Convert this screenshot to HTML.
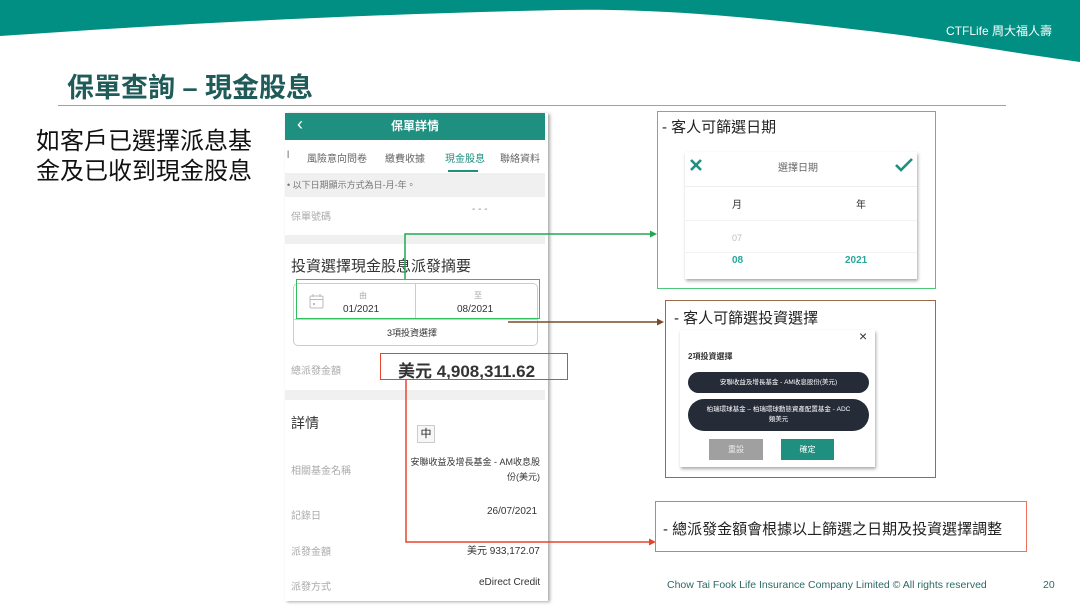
<!DOCTYPE html>
<html><head><meta charset="utf-8"><style>
*{margin:0;padding:0;box-sizing:border-box}
body{width:1080px;height:608px;overflow:hidden;background:#fff;position:relative;font-family:"Liberation Sans","Noto Sans CJK TC",sans-serif;color:#222}
.a{position:absolute;white-space:nowrap}
.g{color:#aaa;font-size:10px}
</style></head><body>
<svg class="a" style="left:0;top:0" width="1080" height="70"><path d="M0 0H1080V62C980 48 930 38 860 30C760 18 660 8 560 10C380 14 200 22 0 36Z" fill="#008f82"/></svg>
<div class="a" style="left:946px;top:22px;color:#fff;font-size:12px">CTF<span style="font-weight:300">Life</span> 周大福人壽</div>
<div class="a" style="left:67px;top:66px;font-size:27px;font-weight:bold;color:#1f5b58">保單查詢 – 現金股息</div>
<div class="a" style="left:58px;top:105px;width:948px;height:1px;background:#8fa9a6"></div>
<div class="a" style="left:36px;top:127px;font-size:24px;line-height:30px;color:#111">如客戶已選擇派息基<br>金及已收到現金股息</div>

<!-- phone -->
<div class="a" style="left:285px;top:113px;width:263px;height:488px;background:#fff;box-shadow:2px 1px 3px #aaa"></div>
<div class="a" style="left:285px;top:113px;width:260px;height:27px;background:#1f8f80;color:#fff;font-size:12px;font-weight:bold;text-align:center;line-height:27px">保單詳情<span style="position:absolute;left:12px;top:-2px;font-weight:normal;font-size:18px">‹</span></div>
<div class="a g" style="left:287px;top:150px;color:#666">Ɩ</div>
<div class="a g" style="left:307px;top:150px;color:#666">風險意向問卷</div>
<div class="a g" style="left:385px;top:150px;color:#666">繳費收據</div>
<div class="a g" style="left:445px;top:150px;color:#1f8f80">現金股息</div>
<div class="a g" style="left:500px;top:150px;color:#666">聯絡資料</div>
<div class="a" style="left:448px;top:170px;width:30px;height:2px;background:#1f8f80"></div>
<div class="a" style="left:285px;top:173px;width:260px;height:24px;background:#f0f0f0"></div>
<div class="a g" style="left:287px;top:178px;color:#777;font-size:9px">• 以下日期顯示方式為日-月-年。</div>
<div class="a g" style="left:291px;top:208px">保單號碼</div>
<div class="a g" style="left:472px;top:204px;color:#888">- - -</div>
<div class="a" style="left:285px;top:235px;width:260px;height:9px;background:#f0f0f0"></div>
<div class="a" style="left:291px;top:255px;font-size:15px;color:#333">投資選擇現金股息派發摘要</div>
<div class="a" style="left:293px;top:283px;width:245px;height:63px;border:1px solid #ccc;border-radius:5px"></div>
<div class="a" style="left:293px;top:319px;width:245px;height:1px;background:#ccc"></div>
<div class="a" style="left:415px;top:284px;width:1px;height:35px;background:#ccc"></div>
<svg class="a" style="left:308px;top:293px" width="18" height="18"><rect x="2" y="3" width="13" height="12" rx="1.5" fill="none" stroke="#bbb"/><line x1="2" y1="6.5" x2="15" y2="6.5" stroke="#bbb"/><line x1="5" y1="1" x2="5" y2="4" stroke="#bbb"/><line x1="12" y1="1" x2="12" y2="4" stroke="#bbb"/><rect x="5" y="10" width="2" height="2" fill="#bbb"/></svg>
<div class="a g" style="left:359px;top:290px;font-size:8px">由</div>
<div class="a" style="left:343px;top:304px;font-size:10px;color:#333">01/2021</div>
<div class="a g" style="left:474px;top:290px;font-size:8px">至</div>
<div class="a" style="left:457px;top:304px;font-size:10px;color:#333">08/2021</div>
<div class="a" style="left:387px;top:326px;font-size:9px;color:#333">3項投資選擇</div>
<div class="a g" style="left:291px;top:362px">總派發金額</div>
<div class="a" style="left:398px;top:357px;font-size:17px;font-weight:bold;color:#333">美元 4,908,311.62</div>
<div class="a" style="left:285px;top:390px;width:260px;height:10px;background:#f0f0f0"></div>
<div class="a" style="left:291px;top:413px;font-size:14px;color:#333">詳情</div>
<div class="a" style="left:417px;top:425px;width:18px;height:18px;border:1px solid #ccc;font-size:11px;text-align:center;line-height:16px;background:#f7f7f7">中</div>
<div class="a g" style="left:291px;top:462px">相關基金名稱</div>
<div class="a" style="left:390px;top:455px;width:150px;text-align:right;font-size:9px;line-height:15px;color:#333">安聯收益及增長基金 - AM收息股<br>份(美元)</div>
<div class="a g" style="left:291px;top:507px">記錄日</div>
<div class="a" style="left:487px;top:506px;font-size:10px;color:#333">26/07/2021</div>
<div class="a g" style="left:291px;top:543px">派發金額</div>
<div class="a" style="left:467px;top:542px;font-size:10px;color:#333">美元 933,172.07</div>
<div class="a g" style="left:291px;top:578px">派發方式</div>
<div class="a" style="left:479px;top:577px;font-size:10px;color:#333">eDirect Credit</div>

<!-- connectors -->
<div class="a" style="left:296px;top:279px;width:244px;height:40px;border:1.5px solid #2fbf5f"></div>
<div class="a" style="left:380px;top:353px;width:188px;height:27px;border:1.5px solid #e8452c"></div>
<svg class="a" style="left:0;top:0" width="1080" height="608">
<polyline points="405,279 405,234 652,234" fill="none" stroke="#20a850" stroke-width="1.5"/><path d="M657 234l-7-3.5v7z" fill="#20a850"/>
<polyline points="508,322 658,322" fill="none" stroke="#7a4a2a" stroke-width="1.5"/><path d="M664 322l-7-3.5v7z" fill="#7a4a2a"/>
<polyline points="406,380 406,542 650,542" fill="none" stroke="#e8452c" stroke-width="1.5"/><path d="M656 542l-7-3.5v7z" fill="#e8452c"/>
</svg>

<!-- right boxes -->
<div class="a" style="left:657px;top:111px;width:279px;height:178px;border:1.5px solid #4cc97a"></div>
<div class="a" style="left:662px;top:116px;font-size:15px;color:#222">- 客人可篩選日期</div>
<div class="a" style="left:685px;top:152px;width:232px;height:127px;background:#fff;box-shadow:1px 2px 3px #aaa"></div>
<svg class="a" style="left:689px;top:158px" width="14" height="14"><path d="M2 2L12 12M12 2L2 12" stroke="#1f8f80" stroke-width="2.6"/></svg>
<svg class="a" style="left:894px;top:157px" width="20" height="16"><path d="M2 8L7 13L18 2" fill="none" stroke="#1f8f80" stroke-width="2.6"/></svg>
<div class="a" style="left:778px;top:159px;font-size:10px;color:#666">選擇日期</div>
<div class="a" style="left:685px;top:186px;width:232px;height:1px;background:#eee"></div>
<div class="a" style="left:732px;top:196px;font-size:10px;color:#333">月</div>
<div class="a" style="left:856px;top:196px;font-size:10px;color:#333">年</div>
<div class="a" style="left:685px;top:220px;width:232px;height:1px;background:#f2f2f2"></div>
<div class="a" style="left:732px;top:233px;font-size:9px;color:#bbb">07</div>
<div class="a" style="left:685px;top:252px;width:232px;height:1px;background:#f2f2f2"></div>
<div class="a" style="left:732px;top:255px;font-size:10px;color:#2aa79a;font-weight:bold">08</div>
<div class="a" style="left:845px;top:255px;font-size:10px;color:#2aa79a;font-weight:bold">2021</div>

<div class="a" style="left:665px;top:300px;width:271px;height:178px;border:1.5px solid #9a6a4a"></div>
<div class="a" style="left:674px;top:307px;font-size:15px;color:#222">- 客人可篩選投資選擇</div>
<div class="a" style="left:680px;top:330px;width:195px;height:137px;background:#fff;box-shadow:1px 2px 3px #aaa"></div>
<div class="a" style="left:859px;top:328px;font-size:14px;color:#333">×</div>
<div class="a" style="left:688px;top:351px;font-size:8px;font-weight:bold;color:#333">2項投資選擇</div>
<div class="a" style="left:688px;top:372px;width:181px;height:21px;border-radius:11px;background:#262b38;color:#fff;font-size:6.5px;text-align:center;line-height:21px">安聯收益及增長基金 - AM收息股份(美元)</div>
<div class="a" style="left:688px;top:399px;width:181px;height:32px;border-radius:16px;background:#262b38;color:#fff;font-size:6.5px;text-align:center;line-height:10px;padding-top:6px">柏瑞環球基金 – 柏瑞環球動態資產配置基金 - ADC<br>類美元</div>
<div class="a" style="left:709px;top:439px;width:54px;height:21px;background:#a0a0a0;color:#eee;font-size:8px;text-align:center;line-height:21px">重設</div>
<div class="a" style="left:781px;top:439px;width:53px;height:21px;background:#1f8f80;color:#fff;font-size:8px;text-align:center;line-height:21px">確定</div>

<div class="a" style="left:655px;top:501px;width:372px;height:51px;border:1.5px solid #f07060"></div>
<div class="a" style="left:663px;top:518px;font-size:15px;color:#222">- 總派發金額會根據以上篩選之日期及投資選擇調整</div>

<div class="a" style="left:667px;top:579px;font-size:10.5px;color:#2a6a66">Chow Tai Fook Life Insurance Company Limited © All rights reserved</div>
<div class="a" style="left:1043px;top:579px;font-size:10.5px;color:#2a6a66">20</div>
</body></html>
